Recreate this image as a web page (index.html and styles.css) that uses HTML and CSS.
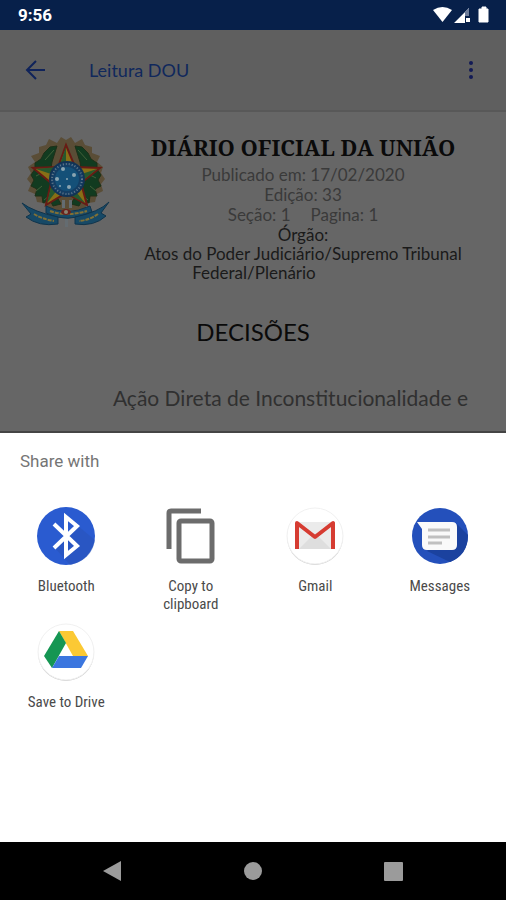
FILE: index.html
```html
<!DOCTYPE html>
<html lang="pt-BR">
<head>
	<meta charset="UTF-8">
	<meta name="viewport" content="width=device-width, initial-scale=1.0">
	<title>Leitura DOU</title>
	<link rel="stylesheet" href="styles.css">
</head>
<body>
	<div class="status-bar">
		<span class="clock">9:56</span>
		<svg class="status-icons" width="58" height="20" viewBox="0 0 58 20">
			<path d="M-1 5 Q8.500 -1 18 5 L8.500 17 Z" fill="#fff"/>
			<path d="M35 3 V11 H31 V18 H20 Z" fill="#fff"/>
			<path d="M35 3 V11 H31 V7 Z" fill="#6d7c99"/>
			<rect x="32" y="13" width="4" height="4" fill="#fff"/>
			<path d="M48 2 h4 v2 h2 v13 h-9 v-13 h3 z" fill="#fff" stroke="#fff" stroke-linejoin="round"/>
		</svg>
	</div>

	<header class="toolbar">
		<button class="icon-button" aria-label="Voltar">
			<svg width="24" height="24" viewBox="0 0 24 24" fill="none" stroke="#10235a" stroke-width="2">
				<path d="M21 12 H4 M12 3 L3 12 L12 21"/>
			</svg>
		</button>
		<h1 class="toolbar-title">Leitura DOU</h1>
		<button class="icon-button" aria-label="Mais opções">
			<svg width="24" height="24" viewBox="0 0 24 24" fill="#121a56">
				<circle cx="13" cy="5" r="2"/>
				<circle cx="13" cy="12" r="2"/>
				<circle cx="13" cy="19" r="2"/>
			</svg>
		</button>
	</header>

	<main class="document">
		<div class="doc-header">
			<svg class="emblem" width="92" height="92" viewBox="10 9 92 92">
				<!-- rays -->
				<path fill="#5a4d36" d="M56 14 L61 11 L65 17 L72 13 L75 19 L82 21 L82 27 L90 30 L87 36 L93 41 L91 47 L95 53 L91 58 L93 65 L87 68 L85 76 L78 77 L74 84 L38 84 L34 77 L27 76 L25 68 L18 65 L21 58 L17 53 L21 47 L18 41 L25 36 L21 30 L29 27 L29 21 L36 19 L39 13 L47 17 L51 11 Z"/>
				<!-- leaves -->
				<g fill="#123b20" stroke="#1d3018" stroke-width="1">
					<path d="M47 20 L40 21 L34 27 L31 33 L25 37 L25 43 L21 49 L24 54 L21 60 L27 63 L25 70 L32 70 L33 77 L40 74 L43 80 L51 78 L44 66 L39 54 L42 36 Z"/>
					<path d="M65 20 L72 21 L78 27 L81 33 L87 37 L87 43 L91 49 L88 54 L91 60 L85 63 L87 70 L80 70 L79 77 L72 74 L69 80 L61 78 L68 66 L73 54 L70 36 Z"/>
				</g>
				<g fill="none" stroke="#416039" stroke-width="1">
					<path d="M44 24 L35 34 M34 46 L26 50 M32 60 L26 65 M39 70 L34 74 M68 24 L77 34 M78 48 L86 52 M80 60 L86 65 M73 70 L78 74"/>
				</g>
				<!-- star -->
				<path fill="#886f16" stroke="#681b14" stroke-width="2" d="M56 19 L65 41 L90 42 L71 57 L77 79 L56 67 L36 79 L41 57 L23 42 L48 41 Z"/>
				<path fill="#27582d" d="M56 21 L56 52 L49 41 Z M87 43 L56 53 L70 57 Z M75 77 L56 53 L56 67 Z M37 77 L56 53 L42 57 Z M26 43 L56 53 L47 41 Z"/>
				<circle cx="57" cy="53" r="17" fill="#143e64" stroke="#123355" stroke-width="2"/>
				<circle cx="57" cy="53" r="15" fill="none" stroke="#64788a" stroke-width="2" stroke-dasharray="1 2"/>
				<circle cx="57" cy="53" r="12" fill="#145078"/>
				<g fill="#8aa4b1">
					<circle cx="53" cy="43" r="2"/>
					<circle cx="64" cy="49" r="2"/>
					<circle cx="47" cy="53" r="2"/>
					<circle cx="57" cy="53" r="1"/>
					<circle cx="59" cy="61" r="2"/>
					<circle cx="50" cy="60" r="1"/>
				</g>
				<!-- sword hilt and ribbon -->
				<path fill="#646c71" d="M52 74 h3 v8 h-3z M59 74 h3 v8 h-3z M55 89 h3 v12 h-3z"/>
				<path fill="#174966" stroke="#10344c" stroke-width="1" d="M36 80 Q56 91 80 80 L82 86 Q57 98 36 87 Z"/>
				<path fill="#174966" stroke="#10344c" stroke-width="1" d="M12 77 Q24 86 48 91 L48 98 Q29 101 16 91 L21 88 Z M99 76 Q89 86 65 91 L65 98 Q84 101 96 90 L91 87 Z"/>
				<path fill="none" stroke="#807036" stroke-width="2" stroke-dasharray="4 1" d="M40 85 Q57 91 77 85 M24 88 Q32 93 44 95 M88 88 Q80 94 69 95"/>
				<ellipse cx="56" cy="86" rx="5" ry="3" fill="#6c201b"/>
				<circle cx="56" cy="86" r="2" fill="#8b8270"/>
			</svg>
			<div class="doc-info">
				<h2 class="doc-title">DIÁRIO OFICIAL DA UNIÃO</h2>
				<p class="doc-meta">Publicado em: 17/02/2020</p>
				<p class="doc-meta">Edição: 33</p>
				<p class="doc-meta doc-pages"><span>Seção: 1</span><span>Pagina: 1</span></p>
				<p class="doc-organ">Órgão:</p>
				<p class="doc-organ">Atos do Poder Judiciário/Supremo Tribunal <span class="organ-end">Federal/Plenário</span></p>
			</div>
		</div>
		<h3 class="doc-section">DECISÕES</h3>
		<p class="doc-text">Ação Direta de Inconstitucionalidade e</p>
	</main>

	<section class="share-sheet" aria-labelledby="shareTitle">
		<h2 class="share-title" id="shareTitle">Share with</h2>
		<div class="share-grid">
			<button class="share-item">
				<svg width="60" height="60" viewBox="0 0 60 60">
					<circle cx="30" cy="30" r="29" fill="#2a5bd0"/>
					<path d="M42 20 L59 34 Q56 54 34 59 L19 42 Z" fill="#284fae" opacity=".4"/>
					<path d="M18 18 L41 40 L30 49 V11 L41 20 L18 42" fill="none" stroke="#fff" stroke-width="4"/>
				</svg>
				<span>Bluetooth</span>
			</button>
			<button class="share-item">
				<svg width="60" height="60" viewBox="0 0 60 60" fill="none" stroke="#6c6c6c" stroke-width="5">
					<path d="M8 43 V7 Q8 5 10 5 H40"/>
					<rect x="18" y="15" width="33" height="40" rx="2"/>
				</svg>
				<span>Copy to clipboard</span>
			</button>
			<button class="share-item">
				<svg width="60" height="60" viewBox="0 0 60 60">
					<circle cx="30" cy="31" r="28" fill="#ccc"/>
					<circle cx="30" cy="30" r="28" fill="#fff" stroke="#f1f1f1"/>
					<path d="M12 16 H48 V43 H12 Z" fill="#ebebeb"/>
					<path d="M14 43 L30 27 L46 43 Z" fill="#dedede"/>
					<path d="M12 43 V17 L30 31 L48 17 V43" fill="none" stroke="#d63c32" stroke-width="4" stroke-linejoin="round"/>
				</svg>
				<span>Gmail</span>
			</button>
			<button class="share-item">
				<svg width="60" height="60" viewBox="0 0 60 60">
					<circle cx="30" cy="30" r="28" fill="#2450bb"/>
					<path d="M47 18 L58 29 Q58 49 40 56 L17 45 Z" fill="#1b429f"/>
					<path d="M7 16 H42 Q47 16 47 21 V39 Q47 44 42 44 H17 Q12 44 12 39 V23 Z" fill="#fafafa"/>
					<path d="M18 24 H40 M18 31 H40 M18 37 H32" stroke="#c0c0c0" stroke-width="3"/>
				</svg>
				<span>Messages</span>
			</button>
			<button class="share-item">
				<svg width="60" height="60" viewBox="0 0 60 60">
					<circle cx="30" cy="31" r="28" fill="#c8c8c8"/>
					<circle cx="30" cy="30" r="28" fill="#fff" stroke="#f1f1f1"/>
					<path d="M23 9 H37 L52 34 H37 Z" fill="#fbc934"/>
					<path d="M23 9 L30 21 L16 46 L8 34 Z" fill="#159653"/>
					<path d="M23 34 H52 L45 46 H16 Z" fill="#3b76df"/>
				</svg>
				<span>Save to Drive</span>
			</button>
		</div>
	</section>

	<nav class="nav-bar">
		<button class="icon-button" aria-label="Back">
			<svg width="24" height="24" viewBox="0 0 24 24" fill="#9b9b9b"><path d="M2 12 L20 2 V22 Z"/></svg>
		</button>
		<button class="icon-button" aria-label="Home">
			<svg width="24" height="24" viewBox="0 0 24 24" fill="#9b9b9b"><circle cx="12" cy="12" r="9"/></svg>
		</button>
		<button class="icon-button" aria-label="Recents">
			<svg width="24" height="24" viewBox="0 0 24 24" fill="#9b9b9b"><rect x="3" y="3" width="19" height="19" rx="1"/></svg>
		</button>
	</nav>
</body>
</html>
```
FILE: styles.css
```css
* {
	box-sizing: border-box;
}
body {
	margin: 0;
	min-height: 100vh;
	display: flex;
	flex-direction: column;
	font-family: Lato, sans-serif;
	background-color: #666;
}
h1, h2, h3, p {
	margin: 0;
	font-weight: normal;
}
button {
	border: 0;
	padding: 0;
	background: none;
	font: inherit;
	color: inherit;
	cursor: pointer;
}
svg {
	display: block;
}

/* Status bar */
.status-bar {
	display: flex;
	align-items: center;
	justify-content: space-between;
	height: 30px;
	padding: 0 14px 0 18px;
	background-color: #07204a;
	color: #fff;
}
.clock {
	font-family: Roboto, sans-serif;
	font-size: 17px;
	font-weight: bold;
}
.status-icons {
	overflow: visible;
}

/* Toolbar */
.toolbar {
	display: flex;
	align-items: center;
	height: 82px;
	padding: 0 24px;
	background-color: #5f5f5f;
	border-bottom: 2px solid #585858;
}
.icon-button {
	flex: none;
	width: 24px;
	height: 24px;
}
.toolbar-title {
	flex: 1;
	padding-left: 41px;
	font-size: 18px;
	color: #10285c;
}

/* Document */
.document {
	padding: 23px 20px 19px;
	color: #1a1a1a;
}
.doc-header {
	display: flex;
	align-items: flex-start;
}
.emblem {
	flex: none;
}
.doc-info {
	flex: 1;
	padding: 0 12px 0 20px;
	text-align: center;
	font-size: 17px;
	line-height: 20px;
}
.doc-title {
	margin-bottom: 6px;
	font-family: "Noto Serif", "DejaVu Serif Condensed", "DejaVu Serif", serif;
	font-size: 22px;
	font-weight: bold;
	line-height: 24px;
	white-space: nowrap;
	color: #0a0a0a;
}
.doc-meta {
	color: #3a3a3a;
}
.doc-pages {
	display: flex;
	justify-content: center;
	gap: 20px;
}
.doc-organ {
	line-height: 19px;
}
.organ-end {
	padding-right: 98px;
}
.doc-section {
	margin-top: 32px;
	text-align: center;
	font-size: 24px;
	line-height: 36px;
	color: #0a0a0a;
}
.doc-text {
	margin-top: 34px;
	padding-right: 18px;
	text-align: right;
	font-size: 21px;
	line-height: 28px;
	color: #303030;
}

/* Share sheet */
.share-sheet {
	flex: 1;
	border-top: 2px solid #444;
	background-color: #fff;
	font-family: Roboto, sans-serif;
}
.share-title {
	padding: 16px 20px 0;
	font-size: 17px;
	line-height: 24px;
	color: #757575;
}
.share-grid {
	display: grid;
	grid-template-columns: repeat(4, 1fr);
	padding: 33px 4px 0;
}
.share-item {
	display: flex;
	flex-direction: column;
	align-items: center;
	gap: 11px;
	height: 116px;
	padding: 0 20px;
	font-size: 15px;
	line-height: 18px;
	color: #4a4a4a;
}
.share-item span {
	max-width: 80px;
	font-family: "Roboto Condensed", "Liberation Sans Narrow", Roboto, sans-serif;
}

/* Navigation bar */
.nav-bar {
	display: flex;
	align-items: center;
	justify-content: space-between;
	height: 58px;
	padding: 0 20%;
	background-color: #000;
}
```
